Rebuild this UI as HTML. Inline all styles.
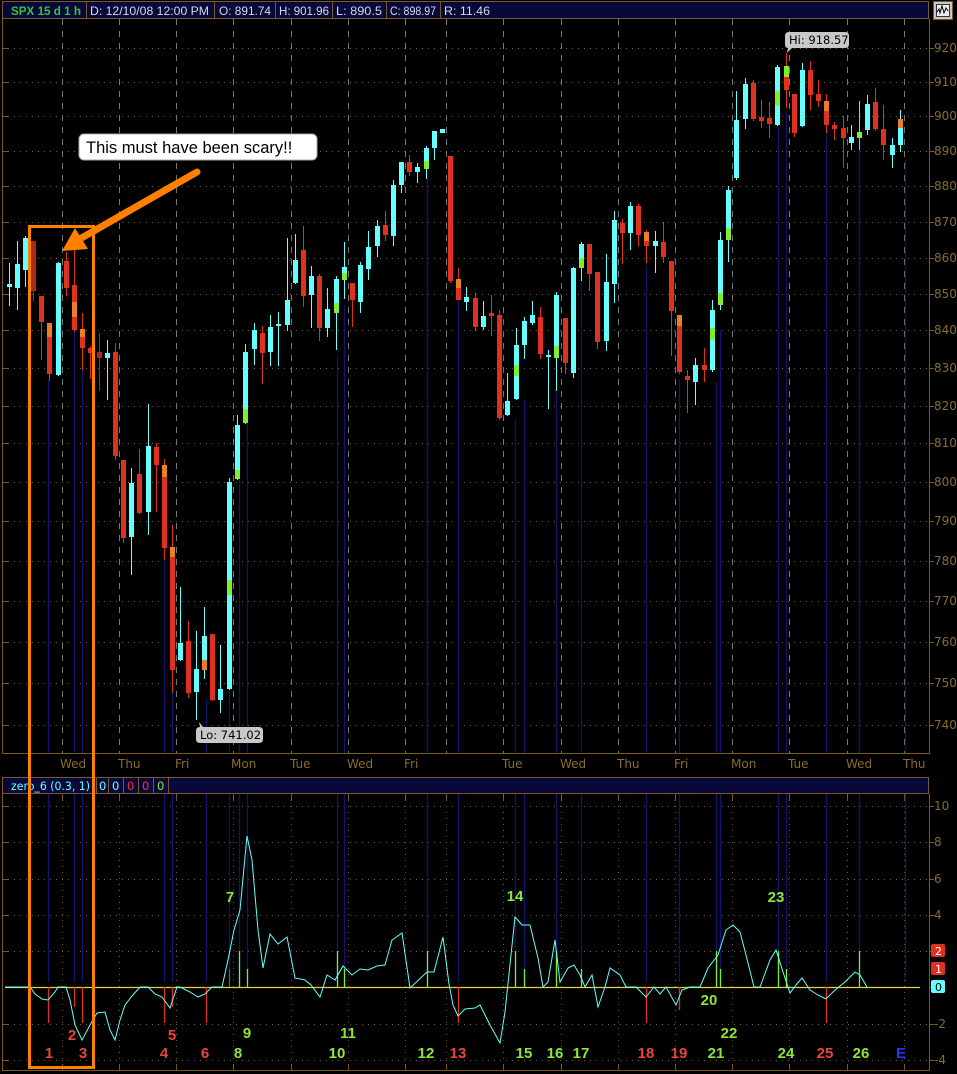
<!DOCTYPE html>
<html><head><meta charset="utf-8"><style>
html,body{margin:0;padding:0;background:#000;}
body{width:957px;height:1074px;overflow:hidden;position:relative;font-family:"DejaVu Sans","Liberation Sans",sans-serif;}
svg{position:absolute;left:0;top:0;}
</style></head><body>
<svg id="s" width="957" height="1074" viewBox="0 0 957 1074" xmlns="http://www.w3.org/2000/svg" font-family="DejaVu Sans, Liberation Sans, sans-serif">
<rect width="957" height="1074" fill="#000"/>
<g id="grid"></g>
<g id="blue"></g>
<g id="candles"></g>
<g id="lower"></g>
<rect x="2.5" y="1.5" width="926" height="17" fill="#08083a" stroke="#7a5a20"/>
<g stroke="#7a5a20"><line x1="86.5" y1="2" x2="86.5" y2="18"/><line x1="214.5" y1="2" x2="214.5" y2="18"/><line x1="275.5" y1="2" x2="275.5" y2="18"/><line x1="332.5" y1="2" x2="332.5" y2="18"/><line x1="386.5" y1="2" x2="386.5" y2="18"/><line x1="440.5" y1="2" x2="440.5" y2="18"/></g>
<g font-size="12" fill="#d8d8e8" font-family="Liberation Sans, sans-serif">
<text x="11" y="15" fill="#3cc03c" font-weight="bold" textLength="70" lengthAdjust="spacingAndGlyphs">SPX 15 d 1 h</text>
<text x="90" y="15" textLength="119" lengthAdjust="spacingAndGlyphs">D: 12/10/08 12:00 PM</text>
<text x="219" y="15" textLength="52" lengthAdjust="spacingAndGlyphs">O: 891.74</text>
<text x="279" y="15" textLength="50" lengthAdjust="spacingAndGlyphs">H: 901.96</text>
<text x="336" y="15" textLength="46" lengthAdjust="spacingAndGlyphs">L: 890.5</text>
<text x="390" y="15" textLength="46" lengthAdjust="spacingAndGlyphs">C: 898.97</text>
<text x="444" y="15" textLength="46" lengthAdjust="spacingAndGlyphs">R: 11.46</text>
</g>
<rect x="933.5" y="1.5" width="19" height="18" fill="#c8c8c8" stroke="#7a5a20"/>
<rect x="936.5" y="4.5" width="13" height="12" fill="#eee" stroke="#333"/>
<path d="M937 12 L939 9 L940 13 L942 6 L944 13 L946 8 L948 11" fill="none" stroke="#000" stroke-width="1"/>
<g stroke="#7a5a20" fill="none"><line x1="2.5" y1="19" x2="2.5" y2="754"/><line x1="2" y1="753.5" x2="929" y2="753.5"/><line x1="929.5" y1="19" x2="929.5" y2="754"/>
<line x1="2.5" y1="794" x2="2.5" y2="1071"/><line x1="2" y1="1070.5" x2="929" y2="1070.5"/><line x1="929.5" y1="794" x2="929.5" y2="1071"/></g>
<g font-size="12" fill="#8a6a30" id="ylab"></g>
<g font-size="12" fill="#8a6a30">
<text x="60" y="768">Wed</text><text x="118" y="768">Thu</text><text x="175" y="768">Fri</text><text x="231" y="768">Mon</text><text x="290" y="768">Tue</text><text x="347" y="768">Wed</text><text x="404" y="768">Fri</text><text x="502" y="768">Tue</text><text x="560" y="768">Wed</text><text x="617" y="768">Thu</text><text x="674" y="768">Fri</text><text x="731" y="768">Mon</text><text x="788" y="768">Tue</text><text x="846" y="768">Wed</text><text x="903" y="768">Thu</text>
</g>
<rect x="2.5" y="777.5" width="926" height="16" fill="#08083a" stroke="#7a5a20"/>
<g stroke="#7a5a20"><line x1="96.5" y1="778" x2="96.5" y2="793"/><line x1="108.5" y1="778" x2="108.5" y2="793"/><line x1="123.5" y1="778" x2="123.5" y2="793"/><line x1="138.5" y1="778" x2="138.5" y2="793"/><line x1="153.5" y1="778" x2="153.5" y2="793"/><line x1="168.5" y1="778" x2="168.5" y2="793"/></g>
<g font-size="11.5"><text x="11" y="790" fill="#66ffff" textLength="79" lengthAdjust="spacingAndGlyphs">zero_6 (0.3, 1)</text>
<text x="99" y="790" fill="#66ffff">0</text><text x="112" y="790" fill="#66ffff">0</text><text x="127" y="790" fill="#ff3030">0</text><text x="142" y="790" fill="#ff3030">0</text><text x="157" y="790" fill="#88ee33">0</text></g>
<path d="M789 32 H845 Q849 32 849 36 V44 Q849 48 845 48 H792 L787 53 L788 48 Q785 48 785 44 V36 Q785 32 789 32Z" fill="#c8c8c8"/>
<text x="789" y="44" font-size="11.5" fill="#000">Hi: 918.57</text>
<path d="M200 727 H259 Q263 727 263 731 V739 Q263 743 259 743 H200 Q196 743 196 739 V731 Q196 727 200 727 L199 722 L203 727Z" fill="#c8c8c8"/>
<text x="200" y="739" font-size="11.5" fill="#000">Lo: 741.02</text>
<rect x="79" y="134" width="238" height="26" rx="5" fill="#fff" stroke="#aaa"/>
<text x="86" y="153" font-family="Liberation Sans, sans-serif" font-size="16.5" fill="#000">This must have been scary!!</text>
<line x1="197" y1="172" x2="78" y2="240" stroke="#ff7f00" stroke-width="7" stroke-linecap="round"/>
<path d="M62 251 L75 228 L88 249 Z" fill="#ff7f00"/>
<rect x="29.5" y="226.5" width="64" height="841" fill="none" stroke="#ff7f00" stroke-width="3"/>
<g font-family="Liberation Sans, sans-serif" font-weight="bold" font-size="15" text-anchor="middle">
<g fill="#e8463a"><text x="49" y="1058">1</text><text x="72" y="1040">2</text><text x="83" y="1058">3</text><text x="164" y="1058">4</text><text x="172" y="1040">5</text><text x="205" y="1058">6</text><text x="458" y="1058">13</text><text x="646" y="1058">18</text><text x="679" y="1058">19</text><text x="825" y="1058">25</text></g>
<g fill="#8de63a"><text x="230" y="902">7</text><text x="238" y="1058">8</text><text x="247" y="1038">9</text><text x="337" y="1058">10</text><text x="348" y="1038">11</text><text x="426" y="1058">12</text><text x="515" y="901">14</text><text x="524" y="1058">15</text><text x="555" y="1058">16</text><text x="581" y="1058">17</text><text x="709" y="1005">20</text><text x="716" y="1058">21</text><text x="729" y="1038">22</text><text x="776" y="902">23</text><text x="786" y="1058">24</text><text x="861" y="1058">26</text></g>
<text x="901" y="1058" fill="#2233ff">E</text>
</g>
<rect x="931" y="944" width="14" height="13" rx="2" fill="#e03020"/><text x="935" y="955" font-size="11" fill="#fff">2</text>
<rect x="931" y="962" width="14" height="13" rx="2" fill="#e03020"/><text x="935" y="973" font-size="11" fill="#fff">1</text>
<rect x="931" y="980" width="14" height="13" rx="2" fill="#66ffff"/><text x="935" y="991" font-size="11" fill="#000">0</text>
</svg>
<script>
var NS="http://www.w3.org/2000/svg";
function el(p,t,a){var e=document.createElementNS(NS,t);for(var k in a)e.setAttribute(k,a[k]);document.getElementById(p).appendChild(e);return e;}
var py=[[920,48],[910,82],[900,116],[890,151],[880,186],[870,222],[860,258],[850,294],[840,330],[830,368],[820,406],[810,443],[800,482],[790,521],[780,561],[770,601],[760,642],[750,683],[740,725]];
py.forEach(function(p){el("grid","line",{x1:8,y1:p[1]+.5,x2:929,y2:p[1]+.5,stroke:"#7a5a20","stroke-dasharray":"1 5"});
el("grid","line",{x1:2,y1:p[1]+.5,x2:8,y2:p[1]+.5,stroke:"#7a5a20"});
el("grid","line",{x1:929,y1:p[1]+.5,x2:934,y2:p[1]+.5,stroke:"#7a5a20"});
var t=el("ylab","text",{x:934,y:p[1]+4});t.textContent=p[0];});
var ly=[[10,806],[8,842],[6,879],[4,915],[2,951],[-2,1024],[-4,1060]];
ly.forEach(function(p){el("grid","line",{x1:8,y1:p[1]+.5,x2:929,y2:p[1]+.5,stroke:"#7a5a20","stroke-dasharray":"1 5"});
el("grid","line",{x1:2,y1:p[1]+.5,x2:8,y2:p[1]+.5,stroke:"#7a5a20"});
el("grid","line",{x1:929,y1:p[1]+.5,x2:934,y2:p[1]+.5,stroke:"#7a5a20"});
var t=el("ylab","text",{x:934,y:p[1]+4});t.textContent=p[0];});
el("grid","line",{x1:929,y1:987.5,x2:934,y2:987.5,stroke:"#7a5a20"});
var vx=[62,119,176,233,291,348,405,446,503,561,618,675,732,789,847,904];
vx.forEach(function(x){el("grid","line",{x1:x+.5,y1:19,x2:x+.5,y2:753,stroke:"#777","stroke-dasharray":"6 6"});
el("grid","line",{x1:x+.5,y1:800,x2:x+.5,y2:1065,stroke:"#7a5a20","stroke-dasharray":"1 5"});
el("grid","line",{x1:x+.5,y1:1065,x2:x+.5,y2:1071,stroke:"#7a5a20"});
el("grid","line",{x1:x+.5,y1:794,x2:x+.5,y2:800,stroke:"#7a5a20"});});
var bl=[[48,380],[74,332],[82,370],[164,560],[172,693],[206,700],[229,692],[239,480],[247,423],[337,356],[344,305],[427,180],[458,300],[515,420],[524,400],[556,392],[581,282],[646,265],[679,380],[716,382],[720,330],[778,128],[786,112],[826,134],[859,140],[905,160]];
bl.forEach(function(b){el("blue","line",{x1:b[0]+.5,y1:b[1],x2:b[0]+.5,y2:753,stroke:"#141470","stroke-width":1.3});
el("blue","line",{x1:b[0]+.5,y1:794,x2:b[0]+.5,y2:982,stroke:"#141470","stroke-width":1.3});});
var C="#66ffff",R="#e03020",O="#e8802a",G="#80ee30",D="#b02818";
var cd=[
[9,284,287,263,306,C],[17,264,288,241,310,C],[25,238,270,236,287,C],[33,241,291,241,302,D],[41,296,322,296,360,R],[49,323,374,323,381,R,[O,323,337]],
[58,263,375,262,376,C],[66,261,288,252,296,R],[74,285,330,250,332,R,[O,302,317]],[82,329,348,313,370,R,[O,329,337]],[90,348,353,346,379,R],[99,352,358,333,391,D],
[107,353,358,340,400,C],[115,352,456,343,460,R],[123,460,538,460,543,R],[131,483,537,468,575,C],[139,474,513,449,514,R],[148,446,512,404,535,C],
[156,447,465,443,512,R],[164,465,548,459,560,R,[O,465,477]],[172,547,670,525,693,R,[O,547,557]],[180,643,660,587,661,C],[188,641,693,621,698,R],[196,669,692,631,720,C],
[204,636,670,607,679,C,[O,660,670]],[212,634,700,634,701,R],[220,689,700,645,713,C],[229,482,689,478,690,C,[G,580,595]],[237,425,479,415,480,C,[G,470,479]],[245,352,423,344,424,C,[G,409,423]],
[254,330,349,323,365,C],[262,333,353,326,384,R],[270,327,352,315,366,C],[278,324,326,312,366,C],[287,300,325,238,331,C],[295,260,283,234,284,C],
[303,250,296,226,307,R],[311,276,295,266,328,C],[319,276,328,274,341,R],[327,309,328,288,337,C],[336,279,313,276,350,C,[G,303,313]],[344,267,280,242,299,C,[G,273,280]],
[352,283,300,283,327,R],[360,265,302,262,313,C],[368,247,269,231,280,C],[377,226,246,220,257,C],[385,225,235,211,241,R],[393,185,236,180,246,C],
[401,162,185,162,193,C],[409,162,172,155,176,R],[417,167,172,163,183,C],[426,148,169,146,179,C,[G,161,169]],[434,131,148,131,160,C],[442,129,133,129,133,C],
[450,156,281,156,283,R],[458,279,300,268,300,R,[O,279,288]],[466,297,302,287,311,C],[475,298,327,293,331,R],[483,316,327,301,330,C],[491,313,316,295,336,R],
[499,315,418,310,420,R],[507,401,415,373,416,C],[516,345,399,328,400,C,[G,365,376]],[524,321,345,317,359,C],[532,315,323,301,325,C],[540,317,354,307,359,R],
[548,355,357,350,409,C],[556,295,358,292,391,C,[G,346,358]],[565,318,363,318,374,R],[573,268,373,267,378,C],[581,244,268,242,281,C,[G,258,268]],[589,244,274,244,291,R],
[597,272,342,272,349,R],[606,282,341,254,351,C],[614,220,284,211,303,C],[622,223,233,219,264,R],[630,206,233,202,250,C],[638,206,235,204,246,R],
[646,232,246,230,263,R,[O,232,241]],[655,241,246,231,273,C],[663,242,257,222,263,R],[671,261,311,261,356,R],[679,315,372,315,374,R,[O,315,326]],[687,376,380,370,413,R],
[695,365,382,358,405,C],[704,365,370,348,382,R],[712,310,370,300,372,C,[G,328,340]],[720,240,305,232,310,C,[G,293,305]],[728,190,240,186,262,C,[G,228,240]],[736,120,178,91,180,C],
[745,84,119,78,129,C],[753,83,119,80,121,R],[761,117,121,100,128,R],[769,118,124,102,138,R],[777,67,125,65,126,C,[G,91,106]],[786,66,90,53,108,R,[G,66,77]],
[794,94,133,94,137,R],[802,70,126,63,127,C],[810,70,95,61,110,R],[818,94,101,80,107,R],[826,101,125,94,133,R,[O,101,111]],[834,125,129,122,140,R],
[843,128,138,116,168,R],[851,137,143,125,150,C],[859,132,138,101,150,G],[867,104,130,95,135,C],[875,102,129,88,131,R],[883,129,145,105,160,R],
[892,145,155,138,168,C],[900,119,145,110,152,C,[O,119,128]]];
cd.forEach(function(c){el("candles","line",{x1:c[0]+.5,y1:c[3],x2:c[0]+.5,y2:c[4],stroke:c[5],"stroke-width":1});
el("candles","rect",{x:c[0]-2,y:c[1],width:5,height:Math.max(2,c[2]-c[1]),fill:c[5]});
if(c[6])el("candles","rect",{x:c[0]-2,y:c[6][1],width:5,height:c[6][2]-c[6][1],fill:c[6][0]});});
el("lower","line",{x1:5,y1:987.5,x2:920,y2:987.5,stroke:"#e8d040","stroke-width":1.2});
var sb=[[48,1023,R],[74,1007,R],[82,1023,R],[164,1023,R],[172,1007,R],[206,1023,R],[229,969,"#3a7a20"],[239,951,G],[247,969,G],[337,951,G],[344,969,G],[427,951,G],[458,1023,R],[515,951,G],[524,969,G],[556,951,G],[581,969,G],[646,1023,R],[679,1010,R],[716,951,G],[720,969,G],[778,951,G],[786,969,G],[826,1023,R],[859,951,G]];
sb.forEach(function(b){el("lower","line",{x1:b[0]+.5,y1:987,x2:b[0]+.5,y2:b[1],stroke:b[2],"stroke-width":1.3});});
var pts=[[5,987],[30,987],[35,994],[42,999],[48,1000],[55,992],[58,987],[66,987],[70,1000],[75,1025],[82,1040],[90,1025],[97,1013],[105,1012],[110,1030],[115,1040],[120,1020],[125,1005],[132,996],[140,987],[148,987],[155,994],[162,997],[170,1008],[177,987],[180,987],[190,992],[198,997],[205,994],[212,987],[222,987],[228,960],[234,930],[240,910],[247,836],[252,860],[258,930],[263,968],[270,934],[278,944],[287,937],[295,978],[305,980],[311,985],[320,997],[327,975],[335,980],[343,966],[352,975],[360,969],[368,970],[377,966],[385,965],[392,940],[402,933],[410,988],[427,972],[434,972],[443,937],[449,984],[453,1005],[458,1016],[465,1009],[475,1008],[480,1005],[490,1025],[500,1043],[505,1012],[515,917],[522,925],[530,925],[538,958],[543,987],[548,982],[555,940],[560,982],[568,968],[574,965],[580,975],[585,987],[592,975],[598,1007],[605,987],[610,968],[620,975],[626,987],[636,987],[646,997],[654,987],[660,994],[666,987],[676,1005],[682,990],[690,987],[700,987],[708,968],[718,955],[726,930],[733,925],[740,932],[746,955],[754,987],[760,987],[770,960],[776,950],[784,975],[790,993],[796,985],[802,978],[810,990],[818,995],[826,999],[835,990],[845,982],[855,972],[860,975],[867,987]];
el("lower","polyline",{points:pts.map(function(p){return p.join(",")}).join(" "),fill:"none",stroke:"#66ffff","stroke-width":1});
</script>
</body></html>
